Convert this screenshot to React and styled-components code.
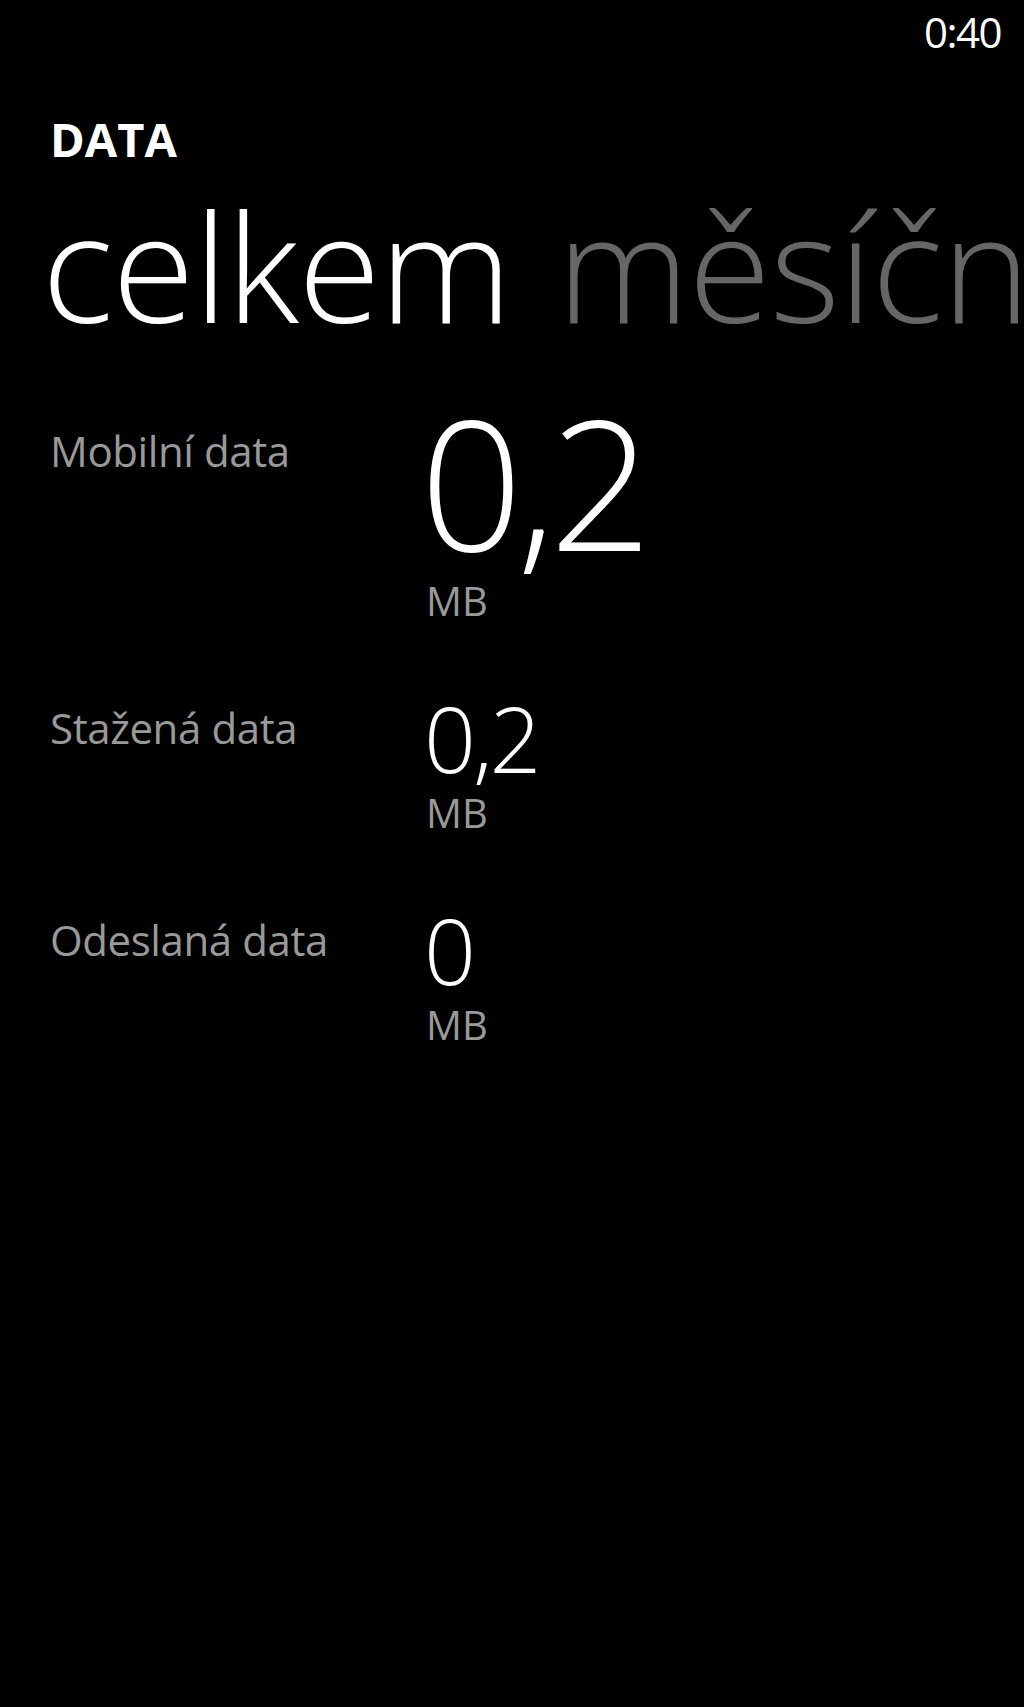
import React from "react";
import styled, { createGlobalStyle } from "styled-components";

const GlobalStyle = createGlobalStyle`
  html, body {
    margin: 0;
    padding: 0;
    background: #000;
  }
  body {
    font-family: "Open Sans", "Noto Sans", sans-serif;
    color: #fff;
  }
`;

const rows = [
  { label: "Mobilní data", value: "0,2", unit: "MB", big: true },
  { label: "Stažená data", value: "0,2", unit: "MB" },
  { label: "Odeslaná data", value: "0", unit: "MB" },
];

const App = () => {
  return (
    <Screen>
      <GlobalStyle />
      <StatusBar>
        <Clock>0:40</Clock>
      </StatusBar>
      <Content>
        <AppTitle>DATA</AppTitle>
        <PivotHeaders>
          <PivotItem active>celkem</PivotItem>
          <PivotItem>měsíčně</PivotItem>
        </PivotHeaders>
        <Rows>
          {rows.map((r) => (
            <Row key={r.label}>
              <Label big={r.big}>{r.label}</Label>
              <ValueBox>
                <Value big={r.big}>{r.value}</Value>
                <Unit>{r.unit}</Unit>
              </ValueBox>
            </Row>
          ))}
        </Rows>
      </Content>
    </Screen>
  );
};

export default App;

const Screen = styled.div`
  width: 1024px;
  height: 1707px;
  background: #000;
  overflow: hidden;
`;

const StatusBar = styled.div`
  display: flex;
  justify-content: flex-end;
  padding: 11px 23px 0 0;
  height: 53px;
`;

const Clock = styled.div`
  font-size: 42px;
  line-height: 1;
  letter-spacing: -1.5px;
  color: #fff;
`;

const Content = styled.div`
  padding-left: 51px;
  padding-top: 52px;
`;

const AppTitle = styled.div`
  font-size: 47px;
  font-weight: 700;
  line-height: 1;
  color: #fff;
  margin-left: -1px;
`;

const PivotHeaders = styled.div`
  display: flex;
  gap: 46px;
  margin: 27px 0 0 -9px;
  white-space: nowrap;
`;

const PivotItem = styled.div`
  font-size: 150px;
  font-weight: 300;
  line-height: 1;
  letter-spacing: -1px;
  color: ${(p) => (p.active ? "#fff" : "#666")};
`;

const Rows = styled.div`
  display: flex;
  flex-direction: column;
  gap: 72px;
  margin-top: 52px;
`;

const Row = styled.div`
  display: grid;
  grid-template-columns: 377px 1fr;
  align-items: start;
`;

const Label = styled.div`
  font-size: 42px;
  line-height: 1;
  letter-spacing: -0.4px;
  color: #999;
  padding-top: ${(p) => (p.big ? "38px" : "14px")};
  margin-left: -1px;
`;

const ValueBox = styled.div`
  display: flex;
  flex-direction: column;
  align-items: flex-start;
`;

const Value = styled.div`
  font-size: ${(p) => (p.big ? "180px" : "91px")};
  font-weight: 300;
  line-height: 1;
  letter-spacing: ${(p) => (p.big ? "-6px" : "-3px")};
  color: #fff;
  margin-left: ${(p) => (p.big ? "-8px" : "-4px")};
`;

const Unit = styled.div`
  font-size: 40px;
  line-height: 1;
  color: #999;
  margin-top: 9px;
  margin-left: -2px;
`;
